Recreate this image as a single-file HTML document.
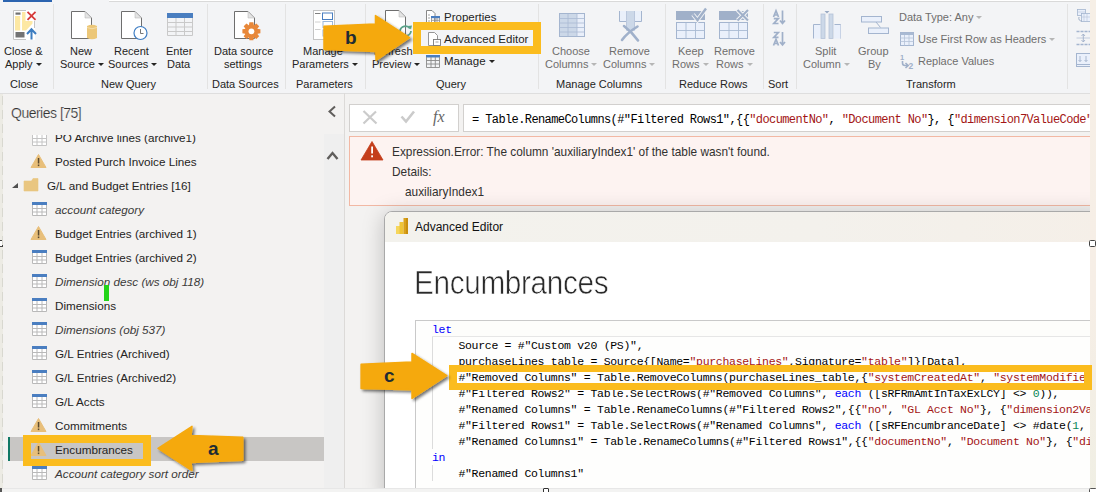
<!DOCTYPE html>
<html><head><meta charset="utf-8">
<style>
*{margin:0;padding:0;box-sizing:border-box}
html,body{width:1096px;height:492px;overflow:hidden;background:#f3f2f1;font-family:"Liberation Sans",sans-serif;color:#252423;position:relative}
.a{position:absolute;white-space:nowrap}
svg.a{overflow:visible}
#ribbon{position:absolute;left:0;top:0;width:1096px;height:94px;background:#f3f4f6;border-bottom:1px solid #dedede}
.sep{position:absolute;top:4px;width:1px;height:85px;background:#e3e3e3}
.rt{position:absolute;font-size:11px;line-height:13px;color:#252423;white-space:nowrap}
.dis{color:#6f6e6d}
.dd{display:inline-block;width:0;height:0;border-left:3px solid transparent;border-right:3px solid transparent;border-top:3px solid #252423;margin-left:3px;vertical-align:2px}
.dis .dd{border-top-color:#b6b6b6}
.q{position:absolute;left:55px;font-size:11.7px;line-height:14px;white-space:nowrap;color:#252423}
.qi{font-style:italic;color:#3b3a39}
.code{position:absolute;font-family:"Liberation Mono",monospace;font-size:11.5px;letter-spacing:-0.3px;line-height:16px;white-space:pre;color:#000}
.kw{color:#0000ff}.st{color:#a31515}.nm{color:#098658}
</style></head><body>
<div class="a" style="left:0;top:0;width:3px;height:492px;background:#ecebe4"></div>
<!-- RIBBON -->
<div id="ribbon"></div>
<div class="a" style="left:3px;top:0;width:49px;height:2px;background:#2b64b0"></div>
<div class="a" style="left:109px;top:0;width:981px;height:2px;border-bottom:1px solid #d9d9d9;background:#fff"></div>
<div class="sep" style="left:53px"></div>
<div class="sep" style="left:207px"></div>
<div class="sep" style="left:285px"></div>
<div class="sep" style="left:365px"></div>
<div class="sep" style="left:538px"></div>
<div class="sep" style="left:665px"></div>
<div class="sep" style="left:763px"></div>
<div class="sep" style="left:796px"></div>
<div class="sep" style="left:1067px"></div>
<svg class="a" style="left:0;top:0" width="1096" height="93" viewBox="0 0 1096 93">
 <!-- Close & Apply -->
 <rect x="13" y="10" width="22" height="30" fill="#fff"/>
 <path d="M26 10.5 H13.5 V39.5 H26 M34.5 21 V28" fill="none" stroke="#c4c4c4"/>
 <rect x="15.5" y="12.5" width="5" height="2.2" fill="#707070"/>
 <rect x="15" y="16" width="5.2" height="14.5" fill="#fde8a3"/>
 <path d="M22 12 H25.5 V21 H32.5 V23.5 L26 30.5 H22 Z" fill="#fde8a3"/>
 <rect x="15.5" y="32" width="9" height="5.5" fill="#737373"/>
 <path d="M27.5 11.8 L35.5 19.8 M35.5 11.8 L27.5 19.8" stroke="#d63a3a" stroke-width="1.8"/>
 <path d="M31.5 39.5 V29.5 M27 34 L31.5 29.2 L36 34" stroke="#3d7dc0" stroke-width="2" fill="none"/>
 <!-- New Source -->
 <path d="M71.5 11.5 H85 L91.5 18 V38.5 H71.5 Z" fill="#fff" stroke="#6e6e6e"/>
 <path d="M85 11.5 V18 H91.5 Z" fill="#e4e4e4" stroke="#b0b0b0" stroke-width="0.5"/>
 <path d="M87 26 Q92 23.5 97 26 V38 Q92 40.5 87 38 Z" fill="#ecc778"/>
 <path d="M87 27.5 Q92 30 97 27.5" stroke="#f7e3b8" stroke-width="0.8" fill="none"/>
 <!-- Recent Sources -->
 <path d="M121.5 11.5 H135 L141.5 18 V38.5 H121.5 Z" fill="#fff" stroke="#6e6e6e"/>
 <path d="M135 11.5 V18 H141.5 Z" fill="#e4e4e4" stroke="#b0b0b0" stroke-width="0.5"/>
 <circle cx="140.5" cy="33" r="6.5" fill="#fff" stroke="#3f7ec4" stroke-width="1.2"/>
 <path d="M140.5 29 V33.5 H143.5" stroke="#666" stroke-width="0.9" fill="none"/>
 <!-- Enter Data -->
 <rect x="167" y="13" width="26" height="5" fill="#4a7ec0"/>
 <path d="M167.5 18 V35.5 H192.5 V18 M167.5 22.5 H192.5 M167.5 27 H192.5 M167.5 31.5 H192.5 M176 18 V35.5 M184.5 18 V35.5" stroke="#c9c9c9" fill="none"/>
 <!-- Data source settings -->
 <path d="M234.5 11.5 H248 L254.5 18 V38.5 H234.5 Z" fill="#fff" stroke="#6e6e6e"/>
 <path d="M248 11.5 V18 H254.5 Z" fill="#e4e4e4" stroke="#b0b0b0" stroke-width="0.5"/>
 <g transform="translate(251.4 31.3)" fill="#e8883a">
  <circle r="6.4"/>
  <g id="teeth"><path d="M-2 -9 H2 L2.6 -5 H-2.6 Z"/><path d="M-2 9 H2 L2.6 5 H-2.6 Z"/><path d="M-9 -2 V2 L-5 2.6 V-2.6 Z"/><path d="M9 -2 V2 L5 2.6 V-2.6 Z"/></g>
  <g transform="rotate(45)"><path d="M-2 -9 H2 L2.6 -5 H-2.6 Z"/><path d="M-2 9 H2 L2.6 5 H-2.6 Z"/><path d="M-9 -2 V2 L-5 2.6 V-2.6 Z"/><path d="M9 -2 V2 L5 2.6 V-2.6 Z"/></g>
  <circle r="2.9" fill="#fff"/>
 </g>
 <!-- Manage Parameters -->
 <rect x="313.5" y="10.5" width="21" height="29" fill="#fff" stroke="#c4c4c4"/>
 <path d="M315 13.5 H320.5" stroke="#808080"/>
 <path d="M315 22 H320.5 M315 29.5 H320.5" stroke="#d0d0d0"/>
 <rect x="322.5" y="13" width="10" height="6.5" fill="#fff" stroke="#4a7ec0" stroke-width="1"/>
 <rect x="323" y="21.5" width="9.5" height="6" fill="#fff" stroke="#9bb8dc" stroke-width="1"/>
 <rect x="323" y="30" width="9.5" height="6" fill="#fff" stroke="#9bb8dc" stroke-width="1"/>
 <!-- Refresh Preview -->
 <path d="M385.5 10.5 H399 L405.5 17 V38.5 H385.5 Z" fill="#fff" stroke="#6e6e6e"/>
 <path d="M399 10.5 V17 H405.5 Z" fill="#e4e4e4" stroke="#b0b0b0" stroke-width="0.5"/>
 <path d="M400 31 A5.5 5.5 0 0 1 410 28.5 M411 31 A5.5 5.5 0 0 1 401 33.5" stroke="#5aa38a" stroke-width="1.8" fill="none"/>
 <path d="M408 26 L411 29.5 L412 25.5 Z M403 36 L400 32.5 L399 36.5 Z" fill="#5aa38a"/>
 <!-- Properties -->
 <path d="M426.5 10.5 H432 L435 13.5 V22.5 H426.5 Z" fill="#fff" stroke="#7a7a7a" stroke-width="0.9"/>
 <path d="M428 15 H430 M428 18 H430 M428 21 H430" stroke="#999" stroke-width="0.9"/>
 <rect x="431" y="16" width="9" height="2.2" fill="#4a7ec0"/>
 <path d="M431.5 18 V22.5 H439.5 V18 M434.5 18 V22.5 M437 18 V22.5 M431.5 20.3 H439.5" stroke="#8a8a8a" stroke-width="0.8" fill="none"/>
 <!-- Advanced Editor icon -->
 <path d="M428.5 32.5 H434.5 L437.5 35.5 V45.5 H428.5 Z" fill="#fff" stroke="#8a8a8a" stroke-width="0.9"/>
 <rect x="433.5" y="39.5" width="7" height="6" fill="#fff" stroke="#7a7a7a" stroke-width="0.9"/>
 <path d="M435.5 42 H438.5" stroke="#8a8a8a" stroke-width="0.8"/>
 <path d="M434 46.5 H440" stroke="#555" stroke-width="1"/>
 <!-- Manage icon -->
 <rect x="426" y="55" width="14" height="2.5" fill="#4a7ec0"/>
 <path d="M426.5 57 V67.5 H439.5 V57 M426.5 60.5 H439.5 M426.5 64 H439.5 M431 57 V67.5 M435.3 57 V67.5" stroke="#8a8a8a" stroke-width="0.9" fill="none"/>
 <!-- Choose Columns -->
 <rect x="559.5" y="13.5" width="25" height="23" fill="#ccd8e8" stroke="#a4b5cf"/>
 <rect x="577" y="14" width="7" height="22" fill="#e9effa"/>
 <path d="M559.5 18.5 H584.5 M559.5 23 H584.5 M559.5 27.5 H584.5 M559.5 32 H584.5 M568 13.5 V36.5 M577 13.5 V36.5" stroke="#a9bad3" stroke-width="0.8" fill="none"/>
 <!-- Remove Columns -->
 <path d="M619.5 11 V21.5 H641.5 V11" fill="#eaf0fa" stroke="#a4b5cf"/>
 <rect x="626" y="11" width="9" height="20" fill="#ccd8e8"/>
 <path d="M626.5 11 V30 M634.5 11 V30" stroke="#b5c3d8" stroke-width="0.8"/>
 <path d="M622 40 Q627 33 637.5 26.5 M624 26 Q632 32 638 40.5" stroke="#a0b1cb" stroke-width="2.6" fill="none" stroke-linecap="round"/>
 <!-- Keep Rows -->
 <rect x="676" y="11" width="29" height="9" fill="#a0b0c9"/>
 <rect x="676.5" y="22.5" width="28" height="16" fill="#eaf0fb" stroke="#a4b5cf"/>
 <path d="M676.5 30.5 H704.5 M686 22.5 V38.5 M695.5 22.5 V38.5" stroke="#a9bad3" stroke-width="0.9"/>
 <path d="M693 14.5 L697.5 20 L706 8.5" stroke="#f3f4f6" stroke-width="4.2" fill="none"/>
 <path d="M693 14.5 L697.5 20 L706 8.5" stroke="#a0b0c9" stroke-width="2.4" fill="none"/>
 <!-- Remove Rows -->
 <rect x="719" y="11" width="29" height="9" fill="#a0b0c9"/>
 <rect x="719.5" y="22.5" width="28" height="16" fill="#eaf0fb" stroke="#a4b5cf"/>
 <path d="M719.5 30.5 H747.5 M729 22.5 V38.5 M738.5 22.5 V38.5" stroke="#a9bad3" stroke-width="0.9"/>
 <path d="M737.5 10 L748 20.5 M748 10 L737.5 20.5" stroke="#f3f4f6" stroke-width="4" fill="none"/>
 <path d="M737.5 10 L748 20.5 M748 10 L737.5 20.5" stroke="#a0b0c9" stroke-width="2.1" fill="none"/>
 <!-- Sort -->
 <g fill="none" stroke="#a0b0c9" stroke-width="1.7">
  <path d="M773.5 17 L776 10.8 L778.5 17 M774.3 15 H777.7"/>
  <path d="M773.8 18.7 H778.3 L773.8 23.5 H778.5"/>
  <path d="M782.5 10.5 V23.5 M780 20.5 L782.5 23.5 L785 20.5"/>
  <path d="M773.8 32.5 H778.3 L773.8 37.3 H778.5"/>
  <path d="M773.5 45.5 L776 39.3 L778.5 45.5 M774.3 43.5 H777.7"/>
  <path d="M782.5 32 V45 M780 42 L782.5 45 L785 42"/>
 </g>
 <!-- Split Column -->
 <path d="M813.5 38.5 V24.5 H820.5 M834.5 24.5 H840.5 V38.5" fill="#eaf0fb" stroke="#a4b5cf"/>
 <rect x="814" y="25" width="6.5" height="13.5" fill="#eaf0fb"/>
 <rect x="834" y="25" width="6.5" height="13.5" fill="#eaf0fb"/>
 <rect x="821" y="14" width="4" height="24.5" fill="#ccd8e8" stroke="#b5c3d8" stroke-width="0.8"/>
 <rect x="829" y="14" width="4" height="24.5" fill="#ccd8e8" stroke="#b5c3d8" stroke-width="0.8"/>
 <path d="M824.5 11 H829.5 L827 13.5 Z" fill="#98a9c3"/>
 <!-- Group By -->
 <rect x="861.5" y="16.5" width="20" height="5.5" fill="#eaf0fb" stroke="#a4b5cf"/>
 <rect x="868.5" y="28" width="20" height="5.5" fill="#eaf0fb" stroke="#a4b5cf"/>
 <path d="M876 22 L880.5 27.5" stroke="#a4b5cf"/>
 <!-- Use first row icon -->
 <rect x="900.5" y="32.5" width="13" height="13" fill="#eaf0fb" stroke="#a4b5cf"/>
 <rect x="900.5" y="32.5" width="13" height="2.5" fill="#a9bad3"/>
 <path d="M900.5 38 H913.5 M900.5 41.5 H913.5 M904.5 35 V45.5 M909 35 V45.5" stroke="#b5c3d8" stroke-width="0.8"/>
 <!-- Replace values icon -->
 <text x="900" y="60" font-family="Liberation Sans" font-weight="bold" font-size="7.5" fill="#a0b0c9">1</text>
 <text x="908.5" y="68.5" font-family="Liberation Sans" font-weight="bold" font-size="8.5" fill="#a0b0c9">2</text>
 <path d="M902.5 61 V63 Q902.5 65.5 905 65.5 H908 M905.5 63 L908.2 65.5 L905.5 68" stroke="#a0b0c9" stroke-width="1.6" fill="none"/>
 <!-- right small icons -->
 <rect x="1077.5" y="9.5" width="8" height="6" fill="#eaf0fb" stroke="#a4b5cf" stroke-width="0.8"/>
 <rect x="1081.5" y="13.5" width="9" height="8" fill="#eaf0fb" stroke="#a4b5cf" stroke-width="0.8"/>
 <path d="M1077.5 12 H1085.5 M1081.5 17 H1090.5 M1084 13.5 V21.5 M1087 13.5 V21.5" stroke="#b5c3d8" stroke-width="0.6"/>
 <path d="M1079 17 Q1078 21 1082 21" stroke="#a0b0c9" stroke-width="1" fill="none"/>
 <path d="M1076.5 31.5 H1090 M1076.5 44.5 H1090" stroke="#a4b5cf" stroke-width="1.3" stroke-dasharray="3 1"/>
 <path d="M1076.5 38 H1090" stroke="#b5c3d8" stroke-width="0.8"/>
 <path d="M1083.3 34 V42 M1081.5 36 L1083.3 34 L1085 36 M1081.5 40 L1083.3 42 L1085 40" stroke="#a0b0c9" stroke-width="0.9" fill="none"/>
 <rect x="1076.5" y="53.5" width="14" height="13" fill="#eaf0fb" stroke="#a4b5cf"/>
 <path d="M1076.5 64.5 H1090" stroke="#a4b5cf"/>
 <path d="M1080 56 V61.5 M1078.5 60 L1080 61.5 L1081.5 60 M1086 56 V61.5 M1084.5 60 L1086 61.5 L1087.5 60" stroke="#a0b0c9" stroke-width="0.9" fill="none"/>
</svg>
<!-- ribbon text -->
<div class="rt" style="left:4px;top:45px">Close &amp;</div>
<div class="rt" style="left:5px;top:58px">Apply<i class="dd"></i></div>
<div class="rt" style="left:10px;top:78px">Close</div>
<div class="rt" style="left:70px;top:45px">New</div>
<div class="rt" style="left:60px;top:58px">Source<i class="dd"></i></div>
<div class="rt" style="left:114px;top:45px">Recent</div>
<div class="rt" style="left:108px;top:58px">Sources<i class="dd"></i></div>
<div class="rt" style="left:166px;top:45px">Enter</div>
<div class="rt" style="left:167px;top:58px">Data</div>
<div class="rt" style="left:101px;top:78px">New Query</div>
<div class="rt" style="left:214px;top:45px">Data source</div>
<div class="rt" style="left:224px;top:58px">settings</div>
<div class="rt" style="left:212px;top:78px">Data Sources</div>
<div class="rt" style="left:303px;top:45px">Manage</div>
<div class="rt" style="left:292px;top:58px">Parameters<i class="dd"></i></div>
<div class="rt" style="left:296px;top:78px">Parameters</div>
<div class="rt" style="left:374px;top:45px">Refresh</div>
<div class="rt" style="left:372px;top:58px">Preview<i class="dd"></i></div>
<div class="rt" style="left:444px;top:11px;font-size:11.5px">Properties</div>
<div class="rt" style="left:444px;top:33px;font-size:11.5px">Advanced Editor</div>
<div class="rt" style="left:444px;top:55px;font-size:11.5px">Manage<i class="dd"></i></div>
<div class="rt" style="left:436px;top:78px">Query</div>
<div class="rt dis" style="left:552px;top:45px">Choose</div>
<div class="rt dis" style="left:545px;top:58px">Columns<i class="dd"></i></div>
<div class="rt dis" style="left:609px;top:45px">Remove</div>
<div class="rt dis" style="left:603px;top:58px">Columns<i class="dd"></i></div>
<div class="rt" style="left:556px;top:78px">Manage Columns</div>
<div class="rt dis" style="left:678px;top:45px">Keep</div>
<div class="rt dis" style="left:672px;top:58px">Rows<i class="dd"></i></div>
<div class="rt dis" style="left:714px;top:45px">Remove</div>
<div class="rt dis" style="left:716px;top:58px">Rows<i class="dd"></i></div>
<div class="rt" style="left:679px;top:78px">Reduce Rows</div>
<div class="rt" style="left:768px;top:78px">Sort</div>
<div class="rt dis" style="left:815px;top:45px">Split</div>
<div class="rt dis" style="left:803px;top:58px">Column<i class="dd"></i></div>
<div class="rt dis" style="left:858px;top:45px">Group</div>
<div class="rt dis" style="left:868px;top:58px">By</div>
<div class="rt dis" style="left:899px;top:11px">Data Type: Any<i class="dd"></i></div>
<div class="rt dis" style="left:918px;top:33px">Use First Row as Headers<i class="dd"></i></div>
<div class="rt dis" style="left:918px;top:55px">Replace Values</div>
<div class="rt" style="left:906px;top:78px">Transform</div>
<!-- QUERIES PANE -->
<div class="a" style="left:344px;top:93px;width:1px;height:399px;background:#dcdad8"></div>
<div class="a" style="left:324px;top:134px;width:20px;height:358px;background:#efefef"></div>
<svg class="a" style="left:0;top:0" width="1096" height="492">
 <path d="M335 106.5 L329.5 111.5 L335 116.5" stroke="#605e5c" stroke-width="2" fill="none"/>
 <path d="M327.5 159 L332.5 153 L337.5 159" stroke="#605e5c" stroke-width="2.4" fill="none"/>
</svg>
<div class="a" style="left:11px;top:104.5px;font-size:14px;line-height:17px;letter-spacing:-0.5px;color:#333;-webkit-text-stroke:0.2px #f3f2f1">Queries [75]</div>
<div class="a" style="left:8px;top:437px;width:316px;height:24px;background:#c8c6c4"></div>
<div class="a" style="left:8px;top:437px;width:2px;height:24px;background:#117865"></div>
<div class="a" style="left:0;top:135px;width:324px;height:353px;overflow:hidden">
 <svg class="a" style="left:0;top:-1px" width="324" height="360">
  
  <g transform="translate(32 -2)"><rect x="0" y="0" width="15" height="3" fill="#c9c9c9"/><path d="M0.5 3 V13.5 H14.5 V3 M0.5 6.5 H14.5 M0.5 10 H14.5 M5 3 V13.5 M10 3 V13.5" stroke="#c4c4c4" fill="#fff"/></g>
  <g transform="translate(31 20)"><path d="M7.5 0.5 L15 13.5 H0 Z" fill="#e8bf7a" stroke="#e8bf7a" stroke-linejoin="round"/><rect x="6.8" y="4" width="1.5" height="5.5" fill="#5a4a30"/><rect x="6.8" y="10.5" width="1.5" height="1.6" fill="#5a4a30"/></g>
  <path d="M12 54 L18 49 V54 Z" fill="#505050"/>
  <path d="M24 47 H31.5 L33 44.5 H38 V57 H24 Z" fill="#e9c680" stroke="#e9c680" stroke-width="0.6" stroke-linejoin="round"/>
  <g transform="translate(32 68)"><rect x="0" y="0" width="15" height="3" fill="#4a7ec0"/><path d="M0.5 3 V13.5 H14.5 V3 M0.5 6.5 H14.5 M0.5 10 H14.5 M5 3 V13.5 M10 3 V13.5" stroke="#b9b9b9" fill="#fff"/></g>
  <g transform="translate(31 92)"><path d="M7.5 0.5 L15 13.5 H0 Z" fill="#e8bf7a" stroke="#e8bf7a" stroke-linejoin="round"/><rect x="6.8" y="4" width="1.5" height="5.5" fill="#5a4a30"/><rect x="6.8" y="10.5" width="1.5" height="1.6" fill="#5a4a30"/></g>
  <g transform="translate(32 116)"><rect x="0" y="0" width="15" height="3" fill="#4a7ec0"/><path d="M0.5 3 V13.5 H14.5 V3 M0.5 6.5 H14.5 M0.5 10 H14.5 M5 3 V13.5 M10 3 V13.5" stroke="#b9b9b9" fill="#fff"/></g>
  <g transform="translate(32 140)"><rect x="0" y="0" width="15" height="3" fill="#4a7ec0"/><path d="M0.5 3 V13.5 H14.5 V3 M0.5 6.5 H14.5 M0.5 10 H14.5 M5 3 V13.5 M10 3 V13.5" stroke="#b9b9b9" fill="#fff"/></g>
  <g transform="translate(32 164)"><rect x="0" y="0" width="15" height="3" fill="#4a7ec0"/><path d="M0.5 3 V13.5 H14.5 V3 M0.5 6.5 H14.5 M0.5 10 H14.5 M5 3 V13.5 M10 3 V13.5" stroke="#b9b9b9" fill="#fff"/></g>
  <g transform="translate(32 188)"><rect x="0" y="0" width="15" height="3" fill="#4a7ec0"/><path d="M0.5 3 V13.5 H14.5 V3 M0.5 6.5 H14.5 M0.5 10 H14.5 M5 3 V13.5 M10 3 V13.5" stroke="#b9b9b9" fill="#fff"/></g>
  <g transform="translate(32 212)"><rect x="0" y="0" width="15" height="3" fill="#4a7ec0"/><path d="M0.5 3 V13.5 H14.5 V3 M0.5 6.5 H14.5 M0.5 10 H14.5 M5 3 V13.5 M10 3 V13.5" stroke="#b9b9b9" fill="#fff"/></g>
  <g transform="translate(32 236)"><rect x="0" y="0" width="15" height="3" fill="#4a7ec0"/><path d="M0.5 3 V13.5 H14.5 V3 M0.5 6.5 H14.5 M0.5 10 H14.5 M5 3 V13.5 M10 3 V13.5" stroke="#b9b9b9" fill="#fff"/></g>
  <g transform="translate(32 260)"><rect x="0" y="0" width="15" height="3" fill="#4a7ec0"/><path d="M0.5 3 V13.5 H14.5 V3 M0.5 6.5 H14.5 M0.5 10 H14.5 M5 3 V13.5 M10 3 V13.5" stroke="#b9b9b9" fill="#fff"/></g>
  <g transform="translate(31 284)"><path d="M7.5 0.5 L15 13.5 H0 Z" fill="#e8bf7a" stroke="#e8bf7a" stroke-linejoin="round"/><rect x="6.8" y="4" width="1.5" height="5.5" fill="#5a4a30"/><rect x="6.8" y="10.5" width="1.5" height="1.6" fill="#5a4a30"/></g>
  <g transform="translate(31 308)"><path d="M7.5 0.5 L15 13.5 H0 Z" fill="#e8bf7a" stroke="#e8bf7a" stroke-linejoin="round"/><rect x="6.8" y="4" width="1.5" height="5.5" fill="#5a4a30"/><rect x="6.8" y="10.5" width="1.5" height="1.6" fill="#5a4a30"/></g>
  <g transform="translate(32 332)"><rect x="0" y="0" width="15" height="3" fill="#4a7ec0"/><path d="M0.5 3 V13.5 H14.5 V3 M0.5 6.5 H14.5 M0.5 10 H14.5 M5 3 V13.5 M10 3 V13.5" stroke="#b9b9b9" fill="#fff"/></g>
 </svg>
 <div class="q" style="top:-4px">PO Archive lines (archive1)</div>
 <div class="q" style="top:20px">Posted Purch Invoice Lines</div>
 <div class="q" style="top:44px;left:47px">G/L and Budget Entries [16]</div>
 <div class="q qi" style="top:68px">account category</div>
 <div class="q" style="top:92px">Budget Entries (archived 1)</div>
 <div class="q" style="top:116px">Budget Entries (archived 2)</div>
 <div class="q qi" style="top:140px">Dimension desc (ws obj 118)</div>
 <div class="q" style="top:164px">Dimensions</div>
 <div class="q qi" style="top:188px">Dimensions (obj 537)</div>
 <div class="q" style="top:212px">G/L Entries (Archived)</div>
 <div class="q" style="top:236px">G/L Entries (Archived2)</div>
 <div class="q" style="top:260px">G/L Accts</div>
 <div class="q" style="top:284px">Commitments</div>
 <div class="q" style="top:308px">Encumbrances</div>
 <div class="q qi" style="top:332px">Account category sort order</div>
</div>
<div class="a" style="left:104px;top:285px;width:5px;height:16px;background:#22d418"></div>


<!-- FORMULA BAR -->
<div class="a" style="left:349px;top:104px;width:110px;height:28px;background:#fff;border:1px solid #d2d0ce"></div>
<svg class="a" style="left:0;top:0" width="1096" height="492">
 <path d="M363.5 111 L376.5 123.5 M376 111.5 L363.5 123.5" stroke="#cbcbcb" stroke-width="2.2"/>
 <path d="M401.5 116.5 L406 121.5 L414 111.5" stroke="#cbcbcb" stroke-width="2.6" fill="none"/>
</svg>
<div class="a" style="left:433px;top:108px;font-family:'Liberation Serif',serif;font-style:italic;font-size:16px;line-height:18px;color:#666">fx</div>
<div class="a" style="left:463px;top:104px;width:627px;height:28px;background:#fff;border:1px solid #d2d0ce;border-right:none"></div>
<div class="code" style="left:472px;top:112px;font-size:12px;letter-spacing:-0.6px">= Table.RenameColumns(#"Filtered Rows1",{{<span class="st">"documentNo"</span>, <span class="st">"Document No"</span>}, {<span class="st">"dimension7ValueCode"</span></div>

<!-- ERROR BOX -->
<div class="a" style="left:349px;top:136px;width:741px;height:70px;background:#fdf3f1;border:1px solid #f2b8a4;border-right:none"></div>
<svg class="a" style="left:0;top:0" width="1096" height="492">
 <path d="M372 141.5 L383 160 H361 Z" fill="#c43e1c" stroke="#c43e1c" stroke-linejoin="round" stroke-width="0.8"/>
 <rect x="371.2" y="146.5" width="1.8" height="7" fill="#fff"/>
 <rect x="371.2" y="155.3" width="1.8" height="2" fill="#fff"/>
</svg>
<div class="a" style="left:392px;top:145px;font-size:11.85px;line-height:14px;color:#323130">Expression.Error: The column 'auxiliaryIndex1' of the table wasn't found.</div>
<div class="a" style="left:392px;top:165px;font-size:11.85px;line-height:14px;color:#323130">Details:</div>
<div class="a" style="left:405px;top:185px;font-size:11.85px;line-height:14px;color:#323130">auxiliaryIndex1</div>

<!-- DIALOG -->
<div class="a" style="left:384px;top:211px;width:721px;height:290px;background:#fff;border:1px solid #a9a9a9;border-radius:8px 0 0 0;overflow:hidden;box-shadow:0 3px 22px rgba(0,0,0,0.22)">
  <div class="a" style="left:0;top:0;width:720px;height:30px;background:linear-gradient(to right,#f3f2ed 0%,#f3f1ec 60%,#f5efe8 100%)"></div>
  <svg class="a" style="left:9.5px;top:6px" width="14" height="18">
   <rect x="1" y="8" width="4" height="8" fill="#f5d65c"/>
   <rect x="4.5" y="4" width="4" height="12" fill="#efc437"/>
   <rect x="8.5" y="0" width="4.5" height="16" fill="#d9a11a"/>
   <rect x="11" y="0" width="2" height="16" fill="#c98f0e"/>
  </svg>
  <div class="a" style="left:30px;top:7.5px;font-size:12px;line-height:14px;color:#111">Advanced Editor</div>
  <div class="a" style="left:29px;top:49.5px;font-size:34px;line-height:40px;letter-spacing:-0.4px;color:#2a2a2a;-webkit-text-stroke:0.65px #fff;transform:scaleX(0.875);transform-origin:0 0">Encumbrances</div>
  <div class="a" style="left:30px;top:108px;width:690px;height:180px;border:1px solid #c9c9c9;background:#fefefd"></div>
</div>
<div class="a" style="left:0;top:488px;width:1096px;height:4px;background:#f3f3f2;border-top:1px solid #e7e7e7"></div>
<div class="a" style="left:0;top:488px;width:2px;height:4px;background:#555"></div>
<div class="a" style="left:543px;top:488px;width:6px;height:6px;border:1.5px solid #333;border-radius:1px;background:#fff"></div>
<!-- CODE -->
<div class="a" style="left:416px;top:321px;width:674px;height:167px;overflow:hidden">
 <div class="a" style="left:16px;top:0;width:660px;height:16px;border-bottom:1px solid #e6e6e6;background:#fdfdfb"></div>
 <div class="a" style="left:16px;top:16px;width:1px;height:112px;background:#dcdcdc"></div>
 <div class="a" style="left:16px;top:144px;width:1px;height:16px;background:#dcdcdc"></div>
 <div class="code" style="left:16px;top:1px"><span class="kw">let</span>
    Source = #"Custom v20 (PS)",
    purchaseLines_table = Source{[Name=<span class="st">"purchaseLines"</span>,Signature=<span class="st">"table"</span>]}[Data],
    #"Removed Columns" = Table.RemoveColumns(purchaseLines_table,{<span class="st">"systemCreatedAt"</span>, <span class="st">"systemModifiedAt"</span>
    #"Filtered Rows2" = Table.SelectRows(#"Removed Columns", <span class="kw">each</span> ([sRFRmAmtInTaxExLCY] &lt;&gt; <span class="nm">0</span>)),
    #"Renamed Columns" = Table.RenameColumns(#"Filtered Rows2",{{<span class="st">"no"</span>, <span class="st">"GL Acct No"</span>}, {<span class="st">"dimension2ValueCode"</span>
    #"Filtered Rows1" = Table.SelectRows(#"Renamed Columns", <span class="kw">each</span> ([sRFEncumbranceDate] &lt;&gt; #date(<span class="nm">1</span>, <span class="nm">1</span>, <span class="nm">1</span>)
    #"Renamed Columns1" = Table.RenameColumns(#"Filtered Rows1",{{<span class="st">"documentNo"</span>, <span class="st">"Document No"</span>}, {<span class="st">"dimension7"</span>
<span class="kw">in</span>
    #"Renamed Columns1"</div>
</div>
<!-- HIGHLIGHT BOXES + ARROWS -->
<div class="a" style="left:413px;top:22px;width:128px;height:32px;border:8px solid #fbbc1e;border-top-width:8px;border-bottom-width:8px"></div>
<div class="a" style="left:23px;top:435px;width:128px;height:31px;border:8px solid #fbbc1e;border-right-width:8px;border-bottom-width:7px"></div>
<div class="a" style="left:1090px;top:0;width:6px;height:492px;background:linear-gradient(to bottom,#f6efe6 0%,#f6eee6 60%,#f0efe4 100%)"></div>
<div class="a" style="left:449px;top:365px;width:643px;height:25px;border:8px solid #fbbc1e;border-top-width:7px;border-bottom-width:7px"></div>
<svg class="a" style="left:0;top:0" width="1096" height="492">
 <defs>
  <filter id="sh" x="-20%" y="-20%" width="140%" height="150%">
   <feGaussianBlur in="SourceAlpha" stdDeviation="1.8"/>
   <feOffset dx="1.5" dy="2" result="b"/>
   <feComponentTransfer><feFuncA type="linear" slope="0.55"/></feComponentTransfer>
   <feMerge><feMergeNode/><feMergeNode in="SourceGraphic"/></feMerge>
  </filter>
 </defs>
 <g fill="#f5a90d" stroke="#f5a90d" stroke-width="1.5" stroke-linejoin="round" filter="url(#sh)">
  <path d="M324 26.3 L375.5 24.1 L375.5 15.6 L409.5 37.6 L376 60.3 L375.8 51.5 L324 49.6 Z"/>
  <path d="M158 448.4 L192 426.4 L191 435.5 L242.8 437.3 L242.8 460.2 L191 462.5 L192 470.5 Z"/>
  <path d="M361.1 364.2 L412 362 L412 353.5 L446.8 375.6 L412 398.4 L412 389.8 L361.1 388.4 Z"/>
 </g>
 <g font-family="Liberation Sans" font-weight="bold" fill="#1f2c33">
  <text x="345" y="44" font-size="19">b</text>
  <text x="208" y="455" font-size="19">a</text>
  <text x="384" y="381.5" font-size="19">c</text>
 </g>
</svg>

<div class="a" style="left:1089px;top:240px;width:7px;height:7px;border:1.5px solid #444;border-radius:1.5px;background:#fff"></div>
<div class="a" style="left:-3px;top:240px;width:6px;height:7px;border:1.5px solid #444;background:#fff"></div>
<div class="a" style="left:2px;top:96px;width:1px;height:392px;background:repeating-linear-gradient(to bottom,#d8d8d0 0 9px,transparent 9px 14px)"></div>
<div class="a" style="left:1089px;top:488px;width:8px;height:7px;border:1.5px solid #555;border-radius:1.5px;background:#fff"></div>
</body></html>
